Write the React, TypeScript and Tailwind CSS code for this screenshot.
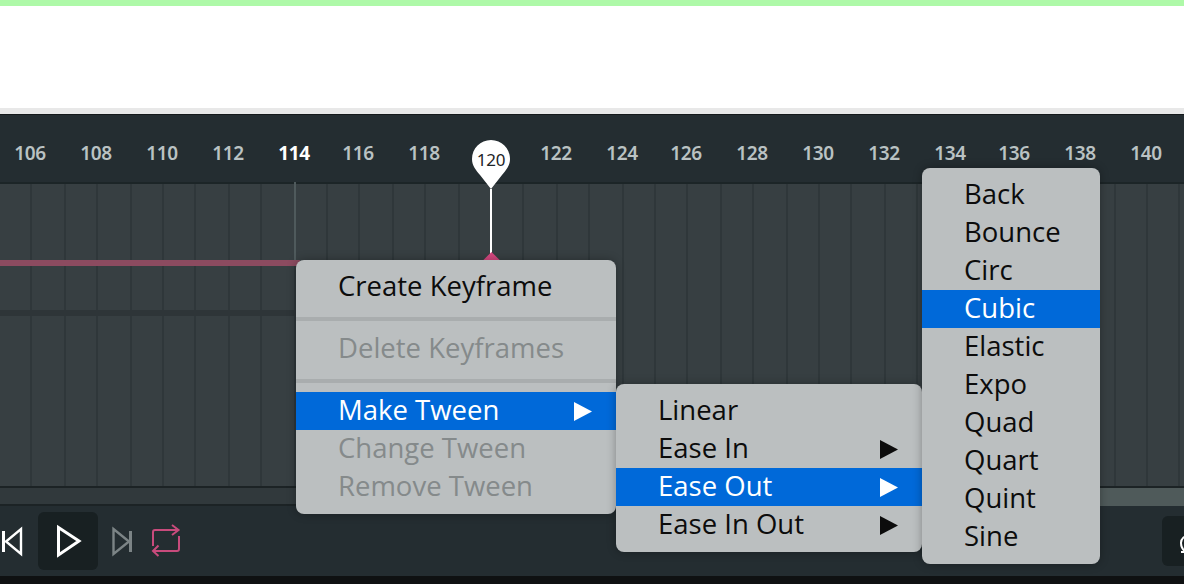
const rulerLabels = [
  { label: '106', width: 'w-[66px]' },
  { label: '108', width: 'w-[66px]' },
  { label: '110', width: 'w-[66px]' },
  { label: '112', width: 'w-[66px]' },
  { label: '114', width: 'w-[66px]', active: true },
  { label: '116', width: 'w-[62px]' },
  { label: '118', width: 'w-[70px]' },
  { label: '', width: 'w-[64px]' },
  { label: '122', width: 'w-[66px]' },
  { label: '124', width: 'w-[66px]' },
  { label: '126', width: 'w-[62px]' },
  { label: '128', width: 'w-[70px]' },
  { label: '130', width: 'w-[62px]' },
  { label: '132', width: 'w-[70px]' },
  { label: '134', width: 'w-[62px]' },
  { label: '136', width: 'w-[66px]' },
  { label: '138', width: 'w-[66px]' },
  { label: '140', width: 'w-[66px]' },
]

const trackColumns = Array.from({ length: 36 }, (_, i) => i)

type MenuItem = {
  label?: string
  disabled?: boolean
  active?: boolean
  submenu?: boolean
  separator?: boolean
}

const mainMenu: MenuItem[] = [
  { label: 'Create Keyframe' },
  { separator: true },
  { label: 'Delete Keyframes', disabled: true },
  { separator: true },
  { label: 'Make Tween', active: true, submenu: true },
  { label: 'Change Tween', disabled: true },
  { label: 'Remove Tween', disabled: true },
]

const tweenMenu: MenuItem[] = [
  { label: 'Linear' },
  { label: 'Ease In', submenu: true },
  { label: 'Ease Out', active: true, submenu: true },
  { label: 'Ease In Out', submenu: true },
]

const easeMenu: MenuItem[] = [
  { label: 'Back' },
  { label: 'Bounce' },
  { label: 'Circ' },
  { label: 'Cubic', active: true },
  { label: 'Elastic' },
  { label: 'Expo' },
  { label: 'Quad' },
  { label: 'Quart' },
  { label: 'Quint' },
  { label: 'Sine' },
]

function Menu({ items, className }: { items: MenuItem[]; className: string }) {
  return (
    <div className={`absolute rounded-lg bg-[#bbbfc0] py-2 font-['Open_Sans',sans-serif] text-[27.5px] leading-[38px] shadow-[0_0_10px_rgba(0,0,0,0.3)] ${className}`}>
      {items.map((item, i) =>
        item.separator ? (
          <div key={i} className="mt-[11px] mb-[9px] h-1 bg-[#a9adae]" />
        ) : (
          <div
            key={i}
            className={`flex h-[38px] items-center justify-between pl-[42px] pr-6 ${
              item.active ? 'bg-[#0069d9] text-white' : item.disabled ? 'text-[#858a8b]' : 'text-[#0c0c0c]'
            }`}
          >
            <span className="mb-[2px]">{item.label}</span>
            {item.submenu && (
              <svg width="18" height="19" viewBox="0 0 18 19" fill="currentColor">
                <path d="M0 0 18 9.5 0 19Z" />
              </svg>
            )}
          </div>
        ),
      )}
    </div>
  )
}

export default function App() {
  return (
    <div className="relative flex h-[584px] w-[1184px] flex-col overflow-hidden bg-white">
      <div className="h-[6px] bg-[#aef9a8]" />
      <div className="h-[102px] bg-white" />
      <div className="h-[6px] bg-[#e8e8e8]" />
      <div className="h-px bg-[#14191b]" />

      {/* ruler */}
      <div className="flex h-[69px] border-b-2 border-[#1c2527] bg-[#242d31] pt-[26px] font-['Noto_Sans',sans-serif] text-[19px] leading-6 font-semibold tracking-[-0.4px] text-[#bac2c3]">
        <div className="-ml-[3px] flex">
          {rulerLabels.map((item, i) => (
            <span key={i} className={`${item.width} shrink-0 text-center ${item.active ? 'font-bold text-white' : ''}`}>
              {item.label}
            </span>
          ))}
        </div>
      </div>

      {/* tracks */}
      <div className="relative flex h-[302px] bg-[#373f42]">
        {trackColumns.map((i) => (
          <div
            key={i}
            className={`h-full shrink-0 border-r-2 border-[#2f373a] ${i % 5 === 1 || i % 5 === 3 ? 'w-[34px]' : 'w-[32px]'}`}
          />
        ))}
        <div className="absolute top-[76px] left-0 h-[6px] w-[300px] bg-[#8c4b60]" />
        <div className="absolute top-[126px] left-0 h-[6px] w-[300px] bg-[#2e3538]" />
        <div className="absolute -top-[2px] left-[294px] h-[78px] w-[2px] bg-[#4f5a5c]" />
      </div>

      {/* scroll gutter */}
      <div className="flex h-[20px] border-y-2 border-[#1c2325] bg-[#31393c]">
        <div className="-mb-[2px] ml-auto w-[300px] bg-[#4f5a5a]" />
      </div>

      {/* transport */}
      <div className="flex h-[70px] items-center bg-[#242d31]">
        <svg width="23" height="32" viewBox="0 0 23 32" fill="none" stroke="white">
          <path d="M3.500 6V27" strokeWidth="3" />
          <path d="M21 4V29L6 16.500Z" strokeWidth="2.400" />
        </svg>
        <div className="ml-[15px] flex h-[58px] w-[60px] items-center justify-center rounded-md bg-[#182022]">
          <svg width="28" height="34" viewBox="0 0 28 34" fill="none" stroke="white" strokeWidth="3">
            <path d="M4.500 3.500V31L25 17Z" />
          </svg>
        </div>
        <svg width="22" height="32" viewBox="0 0 22 32" fill="none" stroke="#7c8486" className="ml-[13px]">
          <path d="M2.500 4V29L18 16.500Z" strokeWidth="2.400" />
          <path d="M19.500 6V27" strokeWidth="3" />
        </svg>
        <svg width="32" height="36" viewBox="0 0 32 36" fill="none" stroke="#c84b7c" strokeWidth="2" className="ml-[17px]">
          <path d="M28 7H5Q3 7 3 9V23" />
          <path d="M22 2 28.500 7 22 12" />
          <path d="M29 13V26Q29 28 27 28H3" />
          <path d="M8.500 22.500 3 28 8.500 33" />
        </svg>
        <div className="ml-auto h-[50px] w-[22px] overflow-hidden rounded-l-md bg-[#182022]">
          <svg width="22" height="50" viewBox="0 0 22 50" fill="none" stroke="white" strokeWidth="2">
            <path d="M30 19C22 19 19 23 19 27C19 31 21 34 24 36H19" />
          </svg>
        </div>
      </div>

      <div className="flex-1 bg-[#0f1112]" />

      {/* playhead */}
      <div className="absolute top-[140px] left-[472px] flex w-[38px] flex-col items-center">
        <div className="relative h-[49px] w-[38px]">
          <svg width="38" height="49" viewBox="0 0 38 49" fill="white" className="absolute inset-0">
            <path d="M19 0C8.500 0 0 8.500 0 19C0 26 4 30 8 35L19 49L30 35C34 30 38 26 38 19C38 8.500 29.500 0 19 0Z" />
          </svg>
          <span className="absolute inset-x-0 top-[8px] text-center font-['Noto_Sans',sans-serif] text-[17px] leading-6 tracking-[-0.3px] text-[#1d2427]">120</span>
        </div>
        <div className="h-[68px] w-[2px] bg-white" />
      </div>
      <div className="absolute top-[255px] left-[483.5px] size-[15px] rotate-45 bg-[#d4487f]" />

      <Menu items={mainMenu} className="top-[260px] left-[296px] w-[320px]" />
      <Menu items={tweenMenu} className="top-[384px] left-[616px] w-[306px]" />
      <Menu items={easeMenu} className="top-[168px] left-[922px] w-[178px]" />
    </div>
  )
}
